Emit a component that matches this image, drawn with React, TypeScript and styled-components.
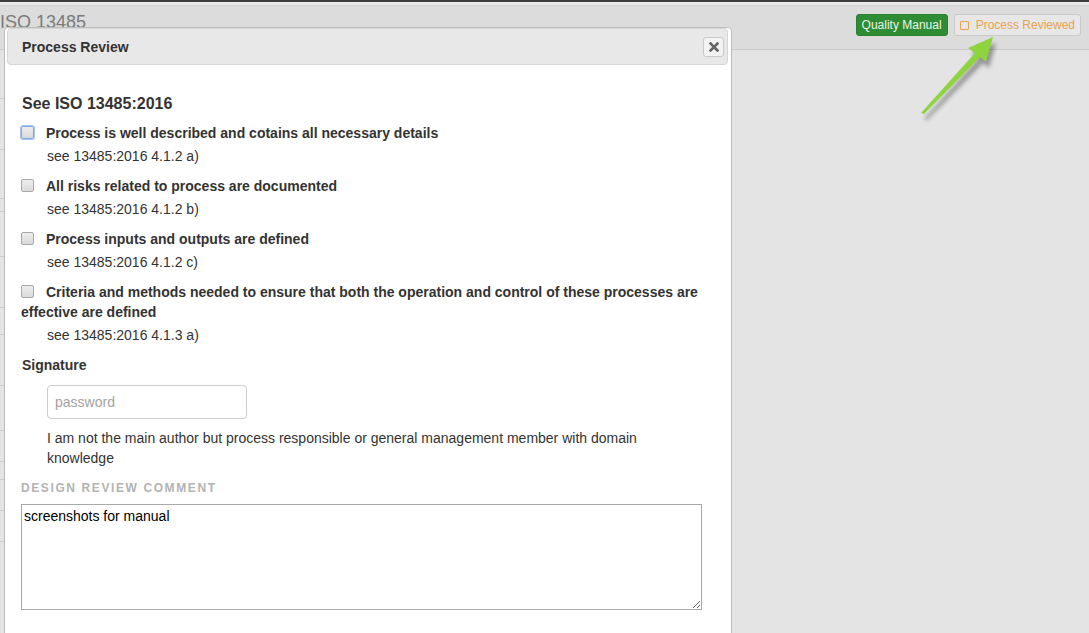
import React from "react";
import styled, { createGlobalStyle } from "styled-components";

const GlobalStyle = createGlobalStyle`
  html, body { margin: 0; padding: 0; }
  body {
    background: #e4e4e4;
    font-family: "Liberation Sans", Arial, sans-serif;
    color: #333;
    overflow: hidden;
  }
`;

const Page = styled.div`
  position: relative;
  width: 1089px;
  height: 633px;
  overflow: hidden;
  background: #e4e4e4;
`;

const TopRule = styled.div`
  height: 2px;
  background: #3c3c3c;
  border-bottom: 3px solid #e9e9e9;
`;

const Header = styled.header`
  height: 35px;
  display: flex;
  align-items: flex-start;
  justify-content: space-between;
  background: #dcdcdc;
  border-top: 1px solid #cfcfcf;
  border-bottom: 1px solid #cacaca;
  padding: 8px 8px 0 0;
  box-sizing: content-box;
`;

const Title = styled.h1`
  margin: -4px 0 0 0;
  font-size: 18px;
  font-weight: normal;
  color: #7a7a7a;
  line-height: 24px;
`;

const Actions = styled.div`
  display: flex;
  gap: 6px;
`;

const Btn = styled.button<{ $variant: "success" | "warning" }>`
  height: 22px;
  display: inline-flex;
  align-items: center;
  gap: 7px;
  padding: 0 5px;
  font-family: "Liberation Sans", Arial, sans-serif;
  font-size: 12px;
  border-radius: 3px;
  border: 1px solid ${(p) => (p.$variant === "success" ? "#2a8031" : "#c9c9c9")};
  background: ${(p) => (p.$variant === "success" ? "#2e8c35" : "#e7e7e7")};
  color: ${(p) => (p.$variant === "success" ? "#e8f6e8" : "#e9a24e")};
`;

const SquareIcon = styled.span`
  width: 7px;
  height: 7px;
  border: 1px solid #e9a24e;
  border-radius: 1px;
`;

const BackList = styled.div`
  display: flex;
  flex-direction: column;
  width: 12px;
`;

const BackRow = styled.div<{ $h: number }>`
  height: ${(p) => p.$h}px;
  border-bottom: 1px solid #cdcdcd;
`;

const Modal = styled.div`
  position: absolute;
  left: 4px;
  top: 27px;
  width: 726px;
  height: 640px;
  background: #fff;
  border: 1px solid #bdbdbd;
  border-radius: 4px;
  box-sizing: content-box;
`;

const ModalHeader = styled.div`
  margin: 0 3px 0 2px;
  height: 35px;
  display: flex;
  align-items: center;
  justify-content: space-between;
  padding: 0 3px 0 14px;
  background: #e8e8e8;
  border: 1px solid #d6d6d6;
  border-radius: 4px;
`;

const ModalTitle = styled.h2`
  margin: 0;
  font-size: 14px;
  font-weight: bold;
  color: #333;
`;

const CloseBtn = styled.button`
  width: 21px;
  height: 20px;
  padding: 0;
  display: flex;
  align-items: center;
  justify-content: center;
  background: #f3f3f3;
  border: 1px solid #cacaca;
  border-radius: 3px;
`;

const Body = styled.div`
  padding: 29px 31px 0 16px;
`;

const SectionTitle = styled.h3`
  margin: 0 0 9px 1px;
  font-size: 16px;
  line-height: 20px;
  font-weight: bold;
  color: #333;
`;

const Item = styled.div`
  margin-bottom: 10px;
`;

const ItemLabel = styled.div`
  font-size: 14px;
  line-height: 20px;
  font-weight: bold;
  color: #333;
`;

const Check = styled.span<{ $focus?: boolean }>`
  display: inline-block;
  vertical-align: -1px;
  width: 11px;
  height: 11px;
  margin: 0 12px 0 0;
  border: 1px solid ${(p) => (p.$focus ? "#7fa8e6" : "#a9a9a9")};
  box-shadow: ${(p) => (p.$focus ? "0 0 0 1px #a9c4ef" : "none")};
  border-radius: 2px;
  background: linear-gradient(#ededed, #dadada);
`;

const Ref = styled.div`
  margin: 3px 0 0 26px;
  font-size: 14px;
  line-height: 20px;
  color: #333;
`;

const FieldLabel = styled.div`
  margin: 0 0 10px 1px;
  font-size: 14px;
  line-height: 20px;
  font-weight: bold;
  color: #333;
`;

const Indent = styled.div`
  padding-left: 26px;
`;

const Password = styled.input`
  display: block;
  box-sizing: border-box;
  width: 200px;
  height: 34px;
  padding: 0 7px;
  font-family: "Liberation Sans", Arial, sans-serif;
  font-size: 14px;
  border: 1px solid #cccccc;
  border-radius: 4px;
  &::placeholder { color: #a3a3a3; }
`;

const Note = styled.p`
  margin: 9px 0 10px 0;
  font-size: 14px;
  line-height: 20px;
  color: #333;
`;

const Caption = styled.div`
  font-size: 12px;
  line-height: 20px;
  font-weight: bold;
  letter-spacing: 1.6px;
  color: #b3b3b3;
  margin-bottom: 6px;
`;

const Comment = styled.textarea`
  display: block;
  box-sizing: border-box;
  width: 681px;
  height: 106px;
  padding: 1px 2px;
  font-family: "Liberation Sans", Arial, sans-serif;
  font-size: 14px;
  line-height: 20px;
  color: #000;
  border: 1px solid #a9a9a9;
  border-radius: 0;
  resize: vertical;
`;

const Arrow = styled.svg`
  position: absolute;
  left: 900px;
  top: 25px;
  pointer-events: none;
`;

const items = [
  { label: "Process is well described and cotains all necessary details", ref: "see 13485:2016 4.1.2 a)", focus: true },
  { label: "All risks related to process are documented", ref: "see 13485:2016 4.1.2 b)" },
  { label: "Process inputs and outputs are defined", ref: "see 13485:2016 4.1.2 c)" },
  {
    label:
      "Criteria and methods needed to ensure that both the operation and control of these processes are effective are defined",
    ref: "see 13485:2016 4.1.3 a)",
  },
];

export default function App() {
  return (
    <Page>
      <GlobalStyle />
      <TopRule />
      <Header>
        <Title>ISO 13485</Title>
        <Actions>
          <Btn $variant="success">Quality Manual</Btn>
          <Btn $variant="warning">
            <SquareIcon />
            Process Reviewed
          </Btn>
        </Actions>
      </Header>
      <BackList>
        {[48, 50, 48, 12, 44, 50, 26, 50, 44, 30, 17, 30, 30].map((h, i) => (
          <BackRow key={i} $h={h} />
        ))}
      </BackList>

      <Arrow width="110" height="100" viewBox="900 25 110 100">
        <defs>
          <filter id="sh" x="-30%" y="-30%" width="160%" height="160%">
            <feGaussianBlur stdDeviation="2" />
          </filter>
        </defs>
        <polygon
          points="922,116 976,56 969,50 994,40 987,65 981,60 925,117"
          fill="#000"
          opacity="0.35"
          filter="url(#sh)"
          transform="translate(2,3)"
        />
        <polygon points="921,113 975,53 968,48 993,37 986,62 980,57 924,114" fill="#8ed43e" />
      </Arrow>

      <Modal>
        <ModalHeader>
          <ModalTitle>Process Review</ModalTitle>
          <CloseBtn aria-label="close">
            <svg width="10" height="10" viewBox="0 0 10 10">
              <path d="M1.5 1.5 L8.5 8.5 M8.5 1.5 L1.5 8.5" stroke="#666" strokeWidth="2.6" strokeLinecap="square" />
            </svg>
          </CloseBtn>
        </ModalHeader>
        <Body>
          <SectionTitle>See ISO 13485:2016</SectionTitle>
          {items.map((it) => (
            <Item key={it.ref}>
              <ItemLabel>
                <Check $focus={it.focus} />
                {it.label}
              </ItemLabel>
              <Ref>{it.ref}</Ref>
            </Item>
          ))}
          <FieldLabel>Signature</FieldLabel>
          <Indent>
            <Password placeholder="password" type="password" />
            <Note>
              I am not the main author but process responsible or general management member with domain knowledge
            </Note>
          </Indent>
          <Caption>DESIGN REVIEW COMMENT</Caption>
          <Comment defaultValue="screenshots for manual" />
        </Body>
      </Modal>
    </Page>
  );
}
